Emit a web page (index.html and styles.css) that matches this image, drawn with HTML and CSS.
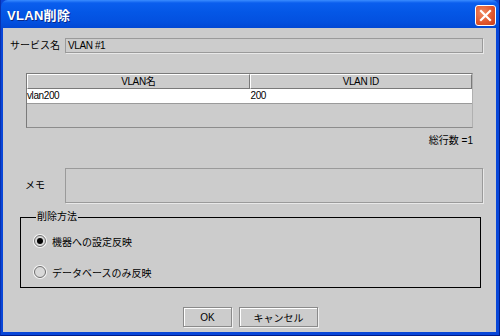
FILE: index.html
```html
<!DOCTYPE html>
<html lang="ja">
<head>
    <meta charset="UTF-8">
    <title>VLAN削除</title>
    <link rel="stylesheet" href="styles.css">
</head>
<body>

<div class="janela">
    <div class="titulo">
        <span class="titulo-texto">VLAN削除</span>
        <span class="fechar">
            <svg width="13" height="13" viewBox="0 0 13 13">
                <path d="M2 2 L11 11 M11 2 L2 11" stroke="#fff" stroke-width="2.2" stroke-linecap="square"/>
            </svg>
        </span>
    </div>

    <div class="conteudo">
        <div class="linha servico">
            <span class="rotulo">サービス名</span>
            <div class="campo">VLAN #1</div>
        </div>

        <div class="tabela">
            <div class="cabecalho">
                <div class="col">VLAN名</div>
                <div class="col">VLAN ID</div>
            </div>
            <div class="registro">
                <div class="col">vlan200</div>
                <div class="col">200</div>
            </div>
        </div>

        <div class="total">総行数 =1</div>

        <div class="linha memo">
            <span class="rotulo">メモ</span>
            <div class="campo area"></div>
        </div>

        <fieldset class="metodo">
            <legend>削除方法</legend>
            <div class="opcao">
                <span class="radio marcado"></span>
                <span>機器への設定反映</span>
            </div>
            <div class="opcao">
                <span class="radio"></span>
                <span>データベースのみ反映</span>
            </div>
        </fieldset>

        <div class="botoes">
            <button class="ok">OK</button>
            <button class="cancelar">キャンセル</button>
        </div>
    </div>
</div>

</body>
</html>
```

FILE: styles.css
```css
body {
    margin: 0;
    padding: 0;
    font-family: "Liberation Sans", "Noto Sans CJK JP", sans-serif;
    font-size: 10px;
    color: #000;
    background-color: #cccccc;
}
.janela {
    width: 500px;
    height: 336px;
    box-sizing: border-box;
    display: flex;
    flex-direction: column;
    background-color: #0846d8;
    border-left: 1px solid #0831b0;
    border-right: 1px solid #001c8a;
    border-bottom: 1px solid #001c8a;
}
.titulo {
    height: 28px;
    flex: none;
    display: flex;
    align-items: center;
    justify-content: space-between;
    padding: 0 3px 0 6px;
    border-radius: 7px 7px 0 0;
    background: linear-gradient(#3a8cff 0, #0a5eee 3px, #0457e6 12px, #0350df 22px, #0248d4 28px);
}
.titulo-texto {
    color: #fff;
    font-weight: bold;
    font-size: 13px;
    letter-spacing: 0.3px;
    text-shadow: 1px 1px 0 #0a2a8a;
    padding-top: 1px;
}
.fechar {
    width: 19px;
    height: 19px;
    display: flex;
    align-items: center;
    justify-content: center;
    border: 1px solid #fff;
    border-radius: 3px;
    background: radial-gradient(circle at 35% 35%, #f08a62, #e0542b 60%, #c83f1c);
    margin-top: 2px;
}
.conteudo {
    flex: 1;
    margin: 0 3px 3px 2px;
    background-color: #cccccc;
    padding-top: 10px;
    overflow: hidden;
}
.linha {
    display: flex;
    align-items: center;
}
.rotulo {
    width: 62px;
    padding-left: 7px;
    box-sizing: border-box;
    flex: none;
    line-height: 12px;
    white-space: nowrap;
}
.memo .rotulo {
    padding-left: 22px;
}
.campo {
    width: 418px;
    height: 15px;
    box-sizing: border-box;
    border: 1px solid #9a9a9a;
    box-shadow: 1px 1px 0 #e8e8e8;
    padding-left: 2px;
    line-height: 13px;
    letter-spacing: -0.4px;
}
.campo.area {
    height: 35px;
}
.tabela {
    margin: 20px 0 0 23px;
    width: 447px;
    height: 55px;
    box-sizing: border-box;
    border: 1px solid #7a7a7a;
    border-bottom-color: #8c8c8c;
    border-right-color: #b0b0b0;
}
.cabecalho,
.registro {
    display: flex;
}
.cabecalho .col {
    width: 50%;
    height: 15px;
    box-sizing: border-box;
    text-align: center;
    line-height: 13px;
    border-top: 1px solid #fff;
    border-left: 1px solid #fff;
    border-right: 1px solid #7a7a7a;
    border-bottom: 1px solid #7a7a7a;
    letter-spacing: -0.4px;
}
.registro {
    background-color: #fff;
    border-bottom: 1px solid #9a9a9a;
}
.registro .col {
    width: 50%;
    height: 14px;
    line-height: 14px;
    letter-spacing: -0.4px;
}
.registro .col + .col {
    padding-left: 2px;
}
.total {
    width: 470px;
    text-align: right;
    margin-top: 7px;
    line-height: 12px;
}
.memo {
    margin-top: 21px;
}
.metodo {
    margin: 8px 0 0 17px;
    width: 461px;
    height: 77px;
    box-sizing: border-box;
    padding: 11px 0 0 13px;
    border: 1px solid #000;
}
.metodo legend {
    padding: 0 1px;
    margin-left: 2px;
    line-height: 12px;
}
.opcao {
    display: flex;
    align-items: center;
    gap: 6px;
    height: 14px;
    margin-bottom: 17px;
}
.radio {
    width: 12px;
    height: 12px;
    box-sizing: border-box;
    border-radius: 50%;
    border: 1px solid #6e6e6e;
    background-color: #d8d8d8;
    box-shadow: 0 0 0 1px #f4f4f4;
    display: flex;
    align-items: center;
    justify-content: center;
}
.radio.marcado::after {
    content: "";
    width: 6px;
    height: 6px;
    border-radius: 50%;
    background-color: #000;
}
.botoes {
    display: flex;
    justify-content: center;
    gap: 7px;
    margin: 19px 0 0 2px;
}
.botoes button {
    height: 20px;
    box-sizing: border-box;
    font-family: "Liberation Sans", "Noto Sans CJK JP", sans-serif;
    font-size: 10px;
    background-color: #cccccc;
    border: 1px solid #8a8a8a;
    box-shadow: inset 1px 1px 0 #fff, 1px 1px 0 #f0f0f0;
    padding: 0;
    color: #000;
}
.botoes .ok {
    width: 49px;
}
.botoes .cancelar {
    width: 79px;
}
```
